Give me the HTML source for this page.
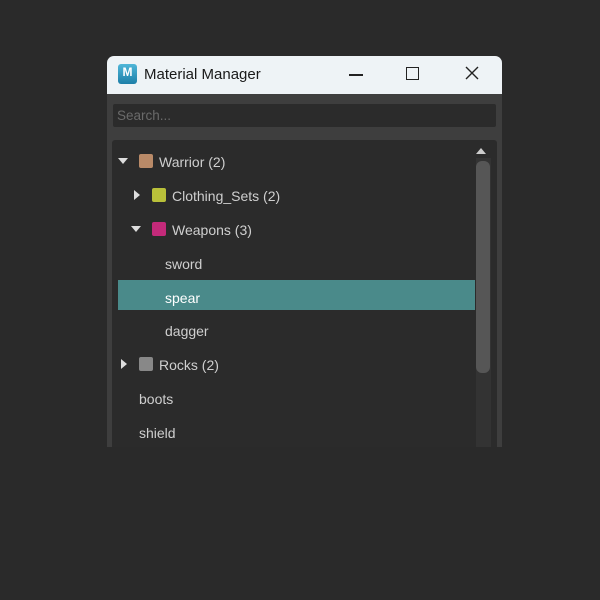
<!DOCTYPE html>
<html><head><style>
body{margin:0;width:600px;height:600px;background:#2a2a2a;position:relative;overflow:hidden;font-family:"Liberation Sans","DejaVu Sans",sans-serif}
.win{position:absolute;left:107px;top:56px;width:395px;height:391px;background:#3e3e3e;border-radius:7px 7px 0 0;overflow:hidden}
.title{position:absolute;left:0;top:0;width:395px;height:38px;background:#eef3f6;}
.title .t{position:absolute;left:37px;top:10px;font-size:15px;color:#1a1a1a}
.logo{position:absolute;left:11px;top:8px;width:19px;height:20px;background:linear-gradient(#4fb6d8,#1d7fa8);border-radius:3px;color:#fff;font-size:12px;font-weight:bold;text-align:center;line-height:16px}
.search{position:absolute;left:6px;top:48px;width:383px;height:23px;background:#2b2b2b;border-radius:2px;color:#6a6a6a;font-size:13.5px;line-height:24px;padding-left:4px;box-sizing:border-box}
.list{position:absolute;left:5px;top:84px;width:385px;height:320px;background:#2b2b2b;border-radius:3px}
.row{position:absolute;height:30px;line-height:32px;font-size:14px;color:#cfcfcf}
.sw{position:absolute;width:14px;height:14px;border-radius:2px;top:8px}
.tri{position:absolute;top:11px;width:0;height:0}
.down{border-left:5px solid transparent;border-right:5px solid transparent;border-top:6px solid #ddd}
.right{border-top:5px solid transparent;border-bottom:5px solid transparent;border-left:6px solid #ddd}
</style></head><body>
<div class="win">
 <div class="title"><div class="logo">M</div><div class="t">Material Manager</div>
  <div style="position:absolute;left:242px;top:18px;width:14px;height:1.5px;background:#222"></div>
  <div style="position:absolute;left:299px;top:11px;width:11px;height:11px;border:1.5px solid #222"></div>
  <svg style="position:absolute;left:358px;top:10px" width="14" height="14"><path d="M1 1L13 13M13 1L1 13" stroke="#222" stroke-width="1.4"/></svg>
 </div>
 <div class="search">Search...</div>
 <div class="list">
  <div style="position:absolute;left:364px;top:8px;border-left:5px solid transparent;border-right:5px solid transparent;border-bottom:6px solid #ccc;width:0;height:0"></div>
  <div style="position:absolute;left:364px;top:18px;width:15px;height:300px;background:#333"></div>
  <div style="position:absolute;left:364px;top:21px;width:14px;height:212px;background:#565656;border-radius:6px"></div>
 </div>
</div>
<div style="position:absolute;left:118px;top:280px;width:357px;height:30px;background:#4a8a8a"></div>
<div class="row" style="left:0;top:146px;width:400px"><div class="tri down" style="left:118px;top:12px"></div><div class="sw" style="left:139px;background:#b98a68"></div><span style="position:absolute;left:159px">Warrior (2)</span></div>
<div class="row" style="left:0;top:180px;width:400px"><div class="tri right" style="left:134px;top:10px"></div><div class="sw" style="left:152px;background:#b9c03a"></div><span style="position:absolute;left:172px">Clothing_Sets (2)</span></div>
<div class="row" style="left:0;top:214px;width:400px"><div class="tri down" style="left:131px;top:12px"></div><div class="sw" style="left:152px;background:#c42a7a"></div><span style="position:absolute;left:172px">Weapons (3)</span></div>
<div class="row" style="left:165px;top:248px">sword</div>
<div class="row" style="left:165px;top:282px;color:#fff">spear</div>
<div class="row" style="left:165px;top:315px">dagger</div>
<div class="row" style="left:0;top:349px;width:400px"><div class="tri right" style="left:121px;top:10px"></div><div class="sw" style="left:139px;background:#888"></div><span style="position:absolute;left:159px">Rocks (2)</span></div>
<div class="row" style="left:139px;top:383px">boots</div>
<div class="row" style="left:139px;top:417px">shield</div>
</body></html>
